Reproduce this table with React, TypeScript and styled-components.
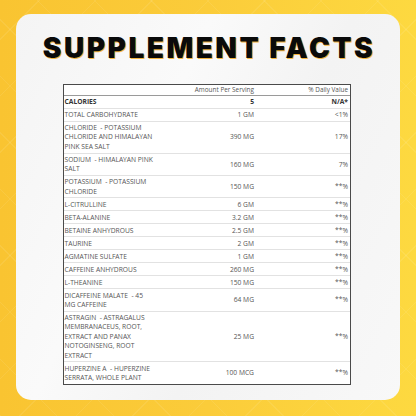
import React from "react";
import styled, { createGlobalStyle } from "styled-components";

const GlobalStyle = createGlobalStyle`
  html, body {
    margin: 0;
    padding: 0;
  }
  body {
    width: 416px;
    height: 416px;
    overflow: hidden;
  }
`;

const Page = styled.div`
  width: 416px;
  height: 416px;
  box-sizing: border-box;
  padding: 14px 16px 16px;
  background-color: #fbcb37;
  background-image:
    repeating-linear-gradient(45deg, rgba(255, 255, 255, 0.08) 0 1px, transparent 1px 40px),
    repeating-linear-gradient(-45deg, rgba(255, 255, 255, 0.08) 0 1px, transparent 1px 40px),
    linear-gradient(90deg, #f9c431 0%, #fbcc3a 50%, #fdd940 100%);
`;

const Card = styled.div`
  height: 100%;
  box-sizing: border-box;
  border-radius: 15px;
  background: linear-gradient(115deg, #f4f4f4 0%, #fafafa 35%, #f3f3f3 60%, #f8f8f8 100%);
  display: flex;
  flex-direction: column;
  align-items: center;
  padding-top: 18px;
`;

const Title = styled.h1`
  margin: 0 0 0 2px;
  font-family: Inter, "Liberation Sans", sans-serif;
  font-weight: 900;
  font-size: 28px;
  line-height: 32px;
  letter-spacing: 2.5px;
  color: #0a0a0a;
  text-shadow: 1px 1px 0 #f4b53f;
`;

const Table = styled.div`
  margin-top: 20px;
  margin-left: -2px;
  width: 288px;
  box-sizing: border-box;
  background: #fff;
  border: 1.5px solid #4a4a4a;
  font-family: "Open Sans", "Liberation Sans", sans-serif;
  font-size: 6.7px;
  color: #555;
`;

const Row = styled.div<{ $head?: boolean; $bold?: boolean }>`
  display: grid;
  grid-template-columns: 90px 1fr 94px;
  line-height: 9.4px;
  padding: ${({ $head }) => ($head ? "0.3px 0 0" : "1.3px 0")};
  border-bottom: 1px solid ${({ $head }) => ($head ? "#9a9a9a" : "#e2e2e2")};
  font-weight: ${({ $bold }) => ($bold ? 700 : 500)};
  color: ${({ $bold }) => ($bold ? "#333" : "#555")};
  &:last-child {
    border-bottom: none;
  }
`;

const Name = styled.div`
  padding-left: 0.5px;
  text-transform: uppercase;
  white-space: pre-wrap;
`;

const Cell = styled.div`
  display: flex;
  align-items: center;
  justify-content: flex-end;
  padding-right: 2px;
`;

const HeadCell = styled(Cell)`
  font-weight: 400;
  font-size: 6.4px;
`;

type Item = { name: string; amount: string; dv: string };

const items: Item[] = [
  { name: "Total Carbohydrate", amount: "1 GM", dv: "<1%" },
  { name: "Chloride  - Potassium Chloride and Himalayan Pink Sea Salt", amount: "390 MG", dv: "17%" },
  { name: "Sodium  - Himalayan Pink Salt", amount: "160 MG", dv: "7%" },
  { name: "Potassium  - Potassium Chloride", amount: "150 MG", dv: "**%" },
  { name: "L-Citrulline", amount: "6 GM", dv: "**%" },
  { name: "Beta-Alanine", amount: "3.2 GM", dv: "**%" },
  { name: "Betaine Anhydrous", amount: "2.5 GM", dv: "**%" },
  { name: "Taurine", amount: "2 GM", dv: "**%" },
  { name: "Agmatine Sulfate", amount: "1 GM", dv: "**%" },
  { name: "Caffeine Anhydrous", amount: "260 MG", dv: "**%" },
  { name: "L-Theanine", amount: "150 MG", dv: "**%" },
  { name: "Dicaffeine Malate  - 45 mg Caffeine", amount: "64 MG", dv: "**%" },
  {
    name: "Astragin  - Astragalus membranaceus, root, extract and Panax notoginseng, root extract",
    amount: "25 MG",
    dv: "**%",
  },
  { name: "Huperzine A  - Huperzine serrata, whole plant", amount: "100 MCG", dv: "**%" },
];

const App: React.FC = () => {
  return (
    <>
      <GlobalStyle />
      <Page>
        <Card>
          <Title>SUPPLEMENT FACTS</Title>
          <Table>
            <Row $head>
              <Name />
              <HeadCell>Amount Per Serving</HeadCell>
              <HeadCell>% Daily Value</HeadCell>
            </Row>
            <Row $bold>
              <Name>Calories</Name>
              <Cell>5</Cell>
              <Cell>N/A*</Cell>
            </Row>
            {items.map((it) => (
              <Row key={it.name}>
                <Name>{it.name}</Name>
                <Cell>{it.amount}</Cell>
                <Cell>{it.dv}</Cell>
              </Row>
            ))}
          </Table>
        </Card>
      </Page>
    </>
  );
};

export default App;
